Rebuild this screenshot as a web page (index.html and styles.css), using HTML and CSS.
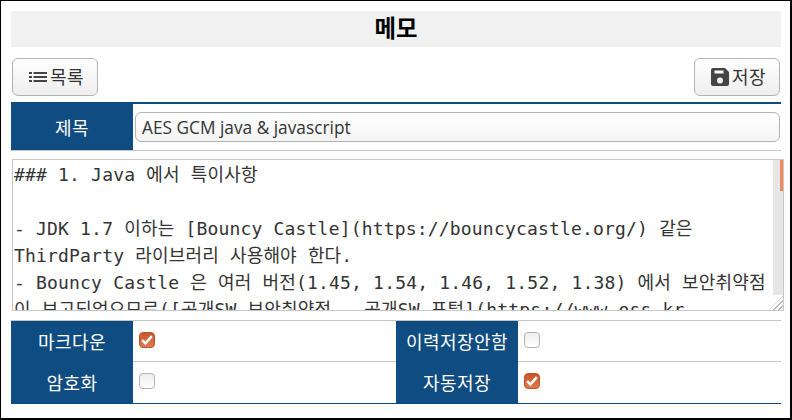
FILE: index.html
```html
<!DOCTYPE html>
<html lang="ko">
<head>
<meta charset="utf-8">
<title>메모</title>
<link rel="stylesheet" href="styles.css">
</head>
<body>
<div class="page">
  <h1 class="title">메모</h1>
  <div class="toolbar">
    <button class="btn">
      <svg class="ico ico-list" viewBox="0 0 18 12"><rect x="0" y="1" width="3" height="2"/><rect x="0" y="5" width="3" height="2"/><rect x="0" y="9" width="3" height="2"/><rect x="4.5" y="1" width="13.5" height="2"/><rect x="4.5" y="5" width="13.5" height="2"/><rect x="4.5" y="9" width="13.5" height="2"/></svg>목록
    </button>
    <button class="btn">
      <svg class="ico ico-save" viewBox="0 0 18 18"><path fill-rule="evenodd" d="M2 0H14L18 4V16a2 2 0 0 1-2 2H2a2 2 0 0 1-2-2V2a2 2 0 0 1 2-2ZM3.5 2.5V5.5H12.5V2.5ZM9 9.5a3 3 0 1 0 0 6A3 3 0 0 0 9 9.5Z"/></svg>저장
    </button>
  </div>
  <div class="subject">
    <label class="head">제목</label>
    <div class="subject-cell"><input class="text" type="text" value="AES GCM java &amp; javascript"></div>
  </div>
  <div class="editor">
<textarea class="memo" spellcheck="false">### 1. Java 에서 특이사항

- JDK 1.7 이하는 [Bouncy Castle](https://bouncycastle.org/) 같은 ThirdParty 라이브러리 사용해야 한다.
- Bouncy Castle 은 여러 버전(1.45, 1.54, 1.46, 1.52, 1.38) 에서 보안취약점이 보고되었으므로([공개SW 보안취약점 - 공개SW 포털](https://www.oss.kr
</textarea>
    <span class="thumb"></span>
    <span class="grip"></span>
  </div>
  <div class="options">
    <div class="head">마크다운</div>
    <div class="cell"><span class="check on"><svg viewBox="0 0 14 14"><polyline points="2.2,7.2 5.4,10.4 11.8,3.2"/></svg></span></div>
    <div class="head">이력저장안함</div>
    <div class="cell"><span class="check"></span></div>
    <div class="head">암호화</div>
    <div class="cell"><span class="check"></span></div>
    <div class="head">자동저장</div>
    <div class="cell"><span class="check on"><svg viewBox="0 0 14 14"><polyline points="2.2,7.2 5.4,10.4 11.8,3.2"/></svg></span></div>
  </div>
</div>
</body>
</html>
```

FILE: styles.css
```css
* { box-sizing: border-box; }
html, body { margin: 0; height: 100%; background: #fff; }
body {
  border: 1px solid #000;
  border-width: 1px 2px 2px 1px;
  font-family: "Open Sans", "Noto Sans CJK KR", sans-serif;
  font-size: 18px;
  color: #333;
}
.page { padding: 10px 9px 0 10px; }

.title {
  margin: 0;
  height: 36px;
  background: #f1f1f1;
  color: #000;
  font-size: 23.4px;
  line-height: 35px;
  font-weight: 700;
  text-align: center;
}

.toolbar {
  display: flex;
  justify-content: space-between;
  padding: 11px 1px 6px;
}
.btn {
  display: flex;
  align-items: center;
  justify-content: center;
  width: 86px;
  height: 38px;
  padding: 0 0 3px 3px;
  border: 1px solid #b3b3b3;
  border-radius: 6px;
  background: linear-gradient(#fff, #eee);
  color: #333;
  font: inherit;
  letter-spacing: .4px;
}
.ico { fill: #444; }
.ico-list { width: 18px; height: 12px; margin: 3px 3px 0 0; }
.ico-save { width: 18px; height: 18px; margin: 3px 3px 0 0; }

.subject {
  display: flex;
  height: 49px;
  border-top: 2px solid #0f4c81;
  border-bottom: 1px solid #c4c4c4;
}
.head {
  display: flex;
  align-items: center;
  justify-content: center;
  background: #0f4c81;
  color: #fff;
  letter-spacing: .4px;
}
.subject .head { width: 122px; }
.subject-cell { flex: 1; padding: 8px 1px 0 2px; }
.text {
  display: block;
  width: 100%;
  height: 30px;
  padding: 0 6px;
  border: 1px solid #b3b3b3;
  border-radius: 6px;
  background: linear-gradient(#fff, #f4f4f4);
  color: #333;
  font: inherit;
  font-size: 17.3px;
}

.editor { position: relative; margin: 8px -3px 9px 1px; height: 152px; }
.memo {
  display: block;
  width: 100%;
  height: 100%;
  padding: 1px 11px 0 1px;
  border: 1px solid #c8c8c8;
  overflow: hidden;
  resize: none;
  color: #333;
  font-family: "DejaVu Sans Mono", "Noto Sans Mono CJK KR", "Noto Sans CJK KR", monospace;
  font-size: 18px;
  letter-spacing: .18px; /* reference has whole-pixel advances */
  line-height: 27px;
  outline: 0;
}
.thumb {
  position: absolute;
  top: 1px;
  right: 1px;
  width: 10px;
  height: 135px;
  background: #e6e6e6;
}
.thumb::before {
  content: "";
  display: block;
  margin-left: 7px;
  width: 3px;
  height: 31px;
  background: #f08a5d;
}
.grip {
  position: absolute;
  right: 1px;
  bottom: 1px;
  width: 14px;
  height: 14px;
  background: repeating-linear-gradient(135deg, #fff 0 2px, #bdbdbd 2px 3.5px);
  clip-path: polygon(100% 0, 100% 100%, 0 100%);
}

.options {
  display: grid;
  grid-template-columns: 122px 263px 122px 1fr;
  grid-auto-rows: 41px;
  border-top: 1px solid #c4c4c4;
  border-bottom: 1px solid #0f4c81;
  background: linear-gradient(#c4c4c4, #c4c4c4) 0 40px / 100% 1px no-repeat;
}
.options .head { padding-bottom: 2px; }
.cell { display: flex; align-items: center; padding: 0 0 4px 6px; }
.check {
  width: 16px;
  height: 16px;
  border: 1px solid #b3b3b3;
  border-radius: 4px;
  background: linear-gradient(#eee, #fff);
}
.check.on {
  border-color: #b5562c;
  background: linear-gradient(#c9562a, #e07a50);
}
.check svg {
  display: block;
  fill: none;
  stroke: #fff;
  stroke-width: 2.6;
}
```
